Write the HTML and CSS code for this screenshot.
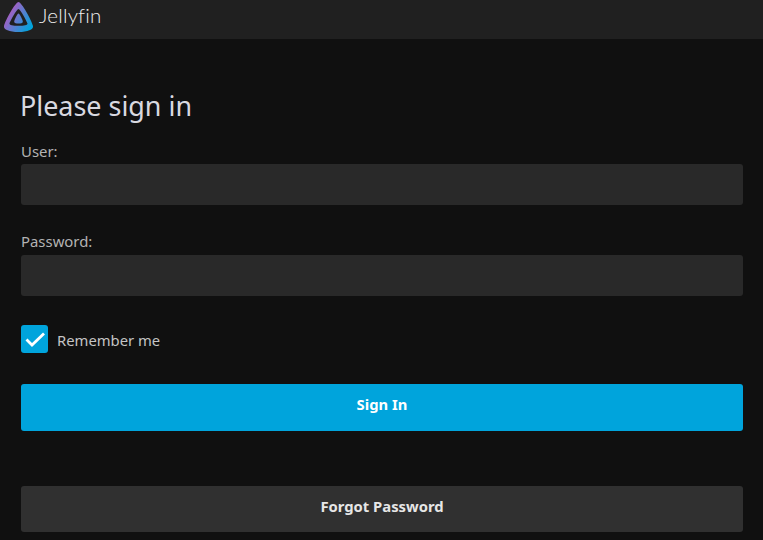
FILE: index.html
```html
<!DOCTYPE html>
<html lang="en">
<head>
<meta charset="utf-8">
<title>Jellyfin</title>
<link rel="stylesheet" href="styles.css">
</head>
<body>
<header class="topbar">
  <svg class="logo" viewBox="0 0 32 32" width="32" height="32" aria-hidden="true">
    <defs>
      <linearGradient id="jf" gradientUnits="userSpaceOnUse" x1="6" y1="10" x2="29" y2="24">
        <stop offset="0" stop-color="#aa5cc3"/>
        <stop offset="1" stop-color="#00a4dc"/>
      </linearGradient>
    </defs>
    <path fill="url(#jf)" fill-rule="evenodd" d="M15.500 1C12.500 1 2.500 19 1 25c-.8 3.500 5.500 6 14.500 6s15.300-2.500 14.500-6C28.500 19 18.500 1 15.500 1ZM15.500 8C13.800 8 7 20.500 6.500 22.500c-.4 1.500 3.500 2.300 9 2.300s9.400-.8 9-2.300C24 20.500 17.200 8 15.500 8Z"/>
    <path fill="url(#jf)" d="M15.500 12.500C14.500 12.500 10.800 19.500 11.200 21c.3 1 2 1.500 4.300 1.500s4-.5 4.300-1.500C20.200 19.500 16.500 12.500 15.500 12.500Z"/>
  </svg>
  <span class="brand">Jellyfin</span>
</header>
<main class="page">
  <h1 class="title">Please sign in</h1>
  <form class="form">
    <div class="field">
      <label class="label" for="user">User:</label>
      <input class="input" id="user" type="text">
    </div>
    <div class="field">
      <label class="label" for="password">Password:</label>
      <input class="input" id="password" type="password">
    </div>
    <label class="remember">
      <span class="check">
        <svg viewBox="0 0 24 24" width="24" height="24" aria-hidden="true"><path d="M3.500 12.500 9 18 21 6.500" fill="none" stroke="#fff" stroke-width="2.800"/></svg>
      </span>
      <span class="remember-text">Remember me</span>
    </label>
    <button class="btn btn-primary" type="button">Sign In</button>
    <button class="btn btn-secondary" type="button">Forgot Password</button>
  </form>
</main>
</body>
</html>
```
FILE: styles.css
```css
* { box-sizing: border-box; }
html, body { margin: 0; height: 100%; overflow: hidden; }
body {
  background: #101010;
  color: rgba(255,255,255,.8);
  font-family: "Noto Sans", sans-serif;
}
.topbar {
  height: 39px;
  background: #202020;
  display: flex;
  align-items: center;
  padding-left: 3px;
  padding-bottom: 6px;
}
.logo { display: block; flex: none; }
.brand {
  margin: 0 0 3px 4px;
  font-family: "Lato", sans-serif;
  font-size: 20.500px;
  font-weight: 300;
  letter-spacing: .2px;
  color: #eee;
}
.page { padding: 0 20px 0 21px; }
.title {
  margin: 49px 0 16px -1px;
  font-size: 26.900px;
  font-weight: 400;
  line-height: 36px;
  color: #d9d9e0;
}
.form { display: flex; flex-direction: column; }
.field { display: flex; flex-direction: column; margin-bottom: 26px; }
.label {
  font-size: 14.900px;
  line-height: 20px;
  height: 24px;
  padding-top: 1px;
  color: #b3b3b3;
}
.field + .field .label { padding-top: 0; }
.input {
  height: 41px;
  border: 0;
  border-radius: 3px;
  background: #292929;
  color: #fff;
}
.remember { display: flex; align-items: center; gap: 9px; margin-top: 3px; }
.check {
  width: 27px;
  height: 28px;
  border-radius: 3px;
  background: #00a4dc;
  display: flex;
  align-items: center;
  justify-content: center;
}
.check svg { display: block; }
.remember-text { padding-top: 2px; font-size: 14.800px; color: #c4c4c4; }
.btn {
  display: block;
  width: 100%;
  border: 0;
  border-radius: 3px;
  font-family: inherit;
  font-size: 14.800px;
  font-weight: 700;
}
.btn-primary { height: 47px; margin-top: 31px; padding-bottom: 8px; background: #00a4dc; color: #fff; }
.btn-secondary { height: 46px; margin-top: 55px; padding-bottom: 8px; background: #303030; color: #e6e6e6; }
```
